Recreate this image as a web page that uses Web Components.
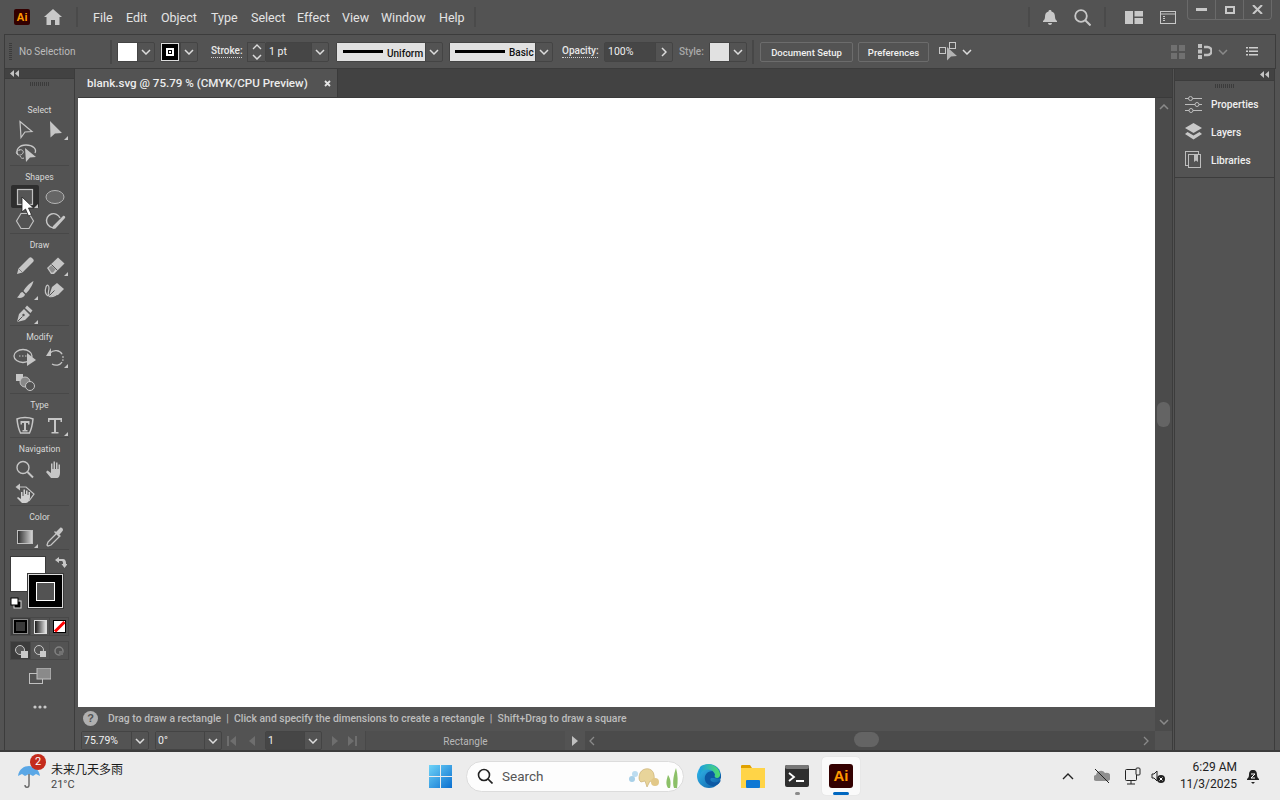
<!DOCTYPE html>
<html>
<head>
<meta charset="utf-8">
<title>Illustrator</title>
<style>
  html, body { margin: 0; height: 100%; overflow: hidden; background: #535353; }
  body { display: flex; flex-direction: column; width: 1280px; height: 800px; font-family: Roboto, "Liberation Sans", sans-serif; }
</style>
</head>
<body>
<ai-app>
  <ai-menubar></ai-menubar>
  <ai-control-bar></ai-control-bar>
  <ai-workspace>
    <ai-toolbar slot="left">
      <ai-tool-group label="Select" height="67" style="--tools-top:1px">
        <ai-tool name="select"></ai-tool><ai-tool name="direct" more></ai-tool><ai-tool name="lasso"></ai-tool>
      </ai-tool-group>
      <ai-tool-group label="Shapes" height="68">
        <ai-tool name="rect" active more></ai-tool><ai-tool name="ellipse"></ai-tool><ai-tool name="hexagon"></ai-tool><ai-tool name="shaper"></ai-tool>
      </ai-tool-group>
      <ai-tool-group label="Draw" height="92">
        <ai-tool name="pencil"></ai-tool><ai-tool name="eraser" more></ai-tool><ai-tool name="brush" more></ai-tool><ai-tool name="blob"></ai-tool><ai-tool name="pen" more></ai-tool>
      </ai-tool-group>
      <ai-tool-group label="Modify" height="68">
        <ai-tool name="warp"></ai-tool><ai-tool name="rotate" more></ai-tool><ai-tool name="builder"></ai-tool>
      </ai-tool-group>
      <ai-tool-group label="Type" height="44">
        <ai-tool name="touch"></ai-tool><ai-tool name="type" more></ai-tool>
      </ai-tool-group>
      <ai-tool-group label="Navigation" height="68">
        <ai-tool name="zoom"></ai-tool><ai-tool name="hand"></ai-tool><ai-tool name="handrot"></ai-tool>
      </ai-tool-group>
      <ai-tool-group label="Color" height="44">
        <ai-tool name="gradient" more></ai-tool><ai-tool name="dropper"></ai-tool>
      </ai-tool-group>
      <ai-color-well></ai-color-well>
    </ai-toolbar>
    <ai-document slot="center"></ai-document>
    <ai-side-panel slot="right">
      <ai-panel-item name="properties">Properties</ai-panel-item>
      <ai-panel-item name="layers">Layers</ai-panel-item>
      <ai-panel-item name="libraries">Libraries</ai-panel-item>
    </ai-side-panel>
  </ai-workspace>
</ai-app>
<win-taskbar></win-taskbar>

<script>
const CHEV = `<svg width="10" height="6" viewBox="0 0 10 6"><polyline points="1,1 5,5 9,1" fill="none" stroke="#dcdcdc" stroke-width="1.5"/></svg>`;
const GRIP = (w, h) => `<svg width="${w}" height="${h}"><defs><pattern id="g" width="2" height="2" patternUnits="userSpaceOnUse"><rect width="1" height="2" fill="#3b3b3b"/></pattern></defs><rect width="${w}" height="${h}" fill="url(#g)"/></svg>`;
const COLLAPSE = `<svg width="9" height="7" viewBox="0 0 9 7"><path d="M4 0v7L0 3.5zM9 0v7L5 3.5z" fill="#c4c4c4"/></svg>`;

// tool icons, 30x24 box centred on the tool position
const ICONS = {
  select: `<path d="M10 4.500l12 10-7 .500-4 5.500z" fill="none" stroke="#c6c6c6" stroke-width="1.200"/>`,
  direct: `<path d="M10 4l12 12-7 .500-4.500 4z" fill="#c6c6c6"/>`,
  lasso: `<path d="M8 14c-3-5 1-10 8-10s11 4 9 8" fill="none" stroke="#c6c6c6" stroke-width="1.300"/><path d="M9 9c3-1 5 1 4 3s-4 3-6 1 1-4 3-4" fill="none" stroke="#c6c6c6"/><path d="M10 15c1 2 2 3 4 2" fill="none" stroke="#c6c6c6"/><path d="M15 7l11 9-6 .500-4 4.500z" fill="#c6c6c6"/>`,
  rect: `<rect x="7.500" y="4.500" width="15" height="15" fill="#555" stroke="#c0c0c0" stroke-width="1.200"/>`,
  ellipse: `<ellipse cx="15" cy="12" rx="9" ry="6.500" fill="#666" stroke="#b4b4b4"/>`,
  hexagon: `<path d="M11 4.500h8l4.500 7.500-4.500 7.500h-8L6.500 12z" fill="none" stroke="#c0c0c0" stroke-width="1.200"/>`,
  shaper: `<path d="M15 18.500A7 7 0 1120 9" fill="none" stroke="#c6c6c6" stroke-width="1.400"/><path d="M13 17L23 7c1-1 3 1 2 2L15.500 19.500l-3 .500z" fill="#c6c6c6"/>`,
  pencil: `<path d="M7 21l1.500-5.500L19 5c1-1 2-1 3 0l1 1c1 1 1 2 0 3L12.500 19.500z" fill="#c6c6c6"/><path d="M8.500 15.500l4 4" stroke="#535353" stroke-width=".600"/>`,
  eraser: `<path d="M7 15L18 4.500l6.500 6L14 21h-3z" fill="#c6c6c6"/><path d="M11.500 11.500l6 6" stroke="#535353" stroke-width="1"/><path d="M8.500 15l3-2.500 4 4L13 19.500h-1.500z" fill="#8c8c8c"/>`,
  brush: `<path d="M23.500 4c-3 1.500-8 6-10 10l2.500 2.500c3-3 6.500-8 7.500-12.500zM12.500 15c-3 .500-3 4-5.500 5.500 3 1 7.500 0 8-3z" fill="#c6c6c6"/>`,
  blob: `<path d="M8 19c-3-2-3-6-2-9s3-2 3 1-2 6 0 8 5 0 7-1" fill="none" stroke="#c6c6c6" stroke-width="1.200"/><path d="M9 19l3-9 5-4 7 6-6 6-6 1z" fill="#c6c6c6"/><path d="M9.500 18.500l5-5" stroke="#535353"/>`,
  pen: `<path d="M7 21l2-8 5-5 6 6-5 5zM15 7l2-2.500 5.500 5-2 2.500z" fill="#c6c6c6"/><path d="M7.500 20.500l5-5" stroke="#535353"/><circle cx="13.500" cy="14" r="1.200" fill="#535353"/>`,
  warp: `<ellipse cx="13" cy="11" rx="9" ry="6.500" fill="none" stroke="#c6c6c6" stroke-width="1.300"/><path d="M9 11h8" stroke="#c6c6c6" stroke-dasharray="1.500 1.500"/><path d="M17 8l9 7-9 6z" fill="#c6c6c6"/>`,
  rotate: `<path d="M10 8c4-4 12-3 13 4s-6 10-11 7" fill="none" stroke="#c6c6c6" stroke-width="1.300" stroke-dasharray="14 2 1.500 1.500 1.500 1.500"/><path d="M11 3v8H6z" fill="#c6c6c6"/>`,
  builder: `<path d="M6 5h7v7H6z" fill="#c6c6c6"/><circle cx="15" cy="13" r="5" fill="#888" stroke="#c6c6c6"/><circle cx="20" cy="17" r="4.500" fill="#535353" stroke="#c6c6c6"/>`,
  touch: `<path d="M7 6c4-2 12-2 16 0-.500 5-1.500 10-3.500 14h-9C8.500 16 7.500 11 7 6z" fill="none" stroke="#c6c6c6" stroke-width="1.500"/><path d="M10.500 8h9v3.500H18V10h-2v7h1.500v1.500h-5V17H14v-7h-2v1.500h-1.500z" fill="#c6c6c6"/>`,
  type: `<path d="M8 5h14v4h-1.500V7H16v12h2.500v1.500h-7V19H14V7H9.500v2H8z" fill="#c6c6c6"/>`,
  zoom: `<circle cx="13" cy="10.500" r="6" fill="none" stroke="#c6c6c6" stroke-width="1.400"/><path d="M17.500 15l5.500 5.500" stroke="#c6c6c6" stroke-width="2"/>`,
  hand: `<path d="M11 21l-5-6 1.500-1.500L11 16V6.500h1.500V12h1V4.500H15V12h1V5.500h1.500V12h1V7.500H20V16c0 3-1.500 5-3 5z" fill="#c6c6c6"/>`,
  handrot: `<path d="M12 22l-5-5 1-1 3 2v-7h1.500v4h1V8.500H15V13h1V9.500h1.500V14h1v-3H20v5c0 3-2 6-4 6z" fill="#d0d0d0"/><path d="M8 6h8l8 7-5 7" fill="none" stroke="#c6c6c6" stroke-width="1.200"/><path d="M10 2.500v7L5.500 6z" fill="#c6c6c6"/>`,
  gradient: `<defs><linearGradient id="gr"><stop offset="0" stop-color="#2c2c2c"/><stop offset="1" stop-color="#d8d8d8"/></linearGradient></defs><rect x="7.500" y="5.500" width="15" height="13" fill="url(#gr)" stroke="#c0c0c0"/>`,
  dropper: `<path d="M8 21l-1-1 1-3 9-9 3 3-9 9z" fill="none" stroke="#c6c6c6" stroke-width="1.300"/><path d="M16 7l4-4c1-1 3 0 3 2 0 1-3 4-4 5l1 1-1 1-5-5 1-1z" fill="#c6c6c6"/>`
};

const PANEL_ICONS = {
  properties: `<g stroke="#bdbdbd" fill="#535353"><path d="M0 3.500h17M0 9.500h17M0 15.500h17"/><circle cx="5.500" cy="3.500" r="2"/><circle cx="12" cy="9.500" r="2"/><circle cx="6" cy="15.500" r="2"/></g>`,
  layers: `<path d="M8.500 0L17 5l-8.500 5L0 5z" fill="#c8c8c8"/><path d="M2.500 9l6 3.500 6-3.500 2.500 2-8.500 5.500L0 11z" fill="#c8c8c8"/>`,
  libraries: `<g fill="none" stroke="#bdbdbd"><rect x=".500" y=".500" width="13" height="14"/><rect x="3.500" y="3.500" width="12" height="13" fill="#535353"/></g><path d="M9 4h4v7l-2-1.500L9 11z" fill="#bdbdbd"/>`
};

class AiApp extends HTMLElement {
  constructor() {
    super();
    this.attachShadow({ mode: 'open' }).innerHTML = `
      <style>
        :host { display: flex; flex-direction: column; height: 752px; background: #535353; border-bottom: 2px solid #3c3c3c; box-sizing: border-box; }
      </style>
      <slot></slot>`;
  }
}

class AiMenubar extends HTMLElement {
  constructor() {
    super();
    const items = [['File', 93], ['Edit', 126], ['Object', 161], ['Type', 211], ['Select', 251], ['Effect', 297], ['View', 342], ['Window', 381], ['Help', 439]];
    this.attachShadow({ mode: 'open' }).innerHTML = `
      <style>
        :host { display: flex; align-items: center; height: 34px; flex: none; position: relative; color: #e4e4e4; font: 12.500px Roboto, sans-serif; }
        .logo { margin-left: 14px; width: 16px; height: 16px; background: #330000; border-radius: 2px; color: #ff9a00; font: bold 11px/16px "Liberation Sans", sans-serif; text-align: center; }
        .home { margin-left: 14px; display: block; }
        .sep { width: 2px; height: 20px; background: #4a4a4a; flex: none; }
        nav { display: flex; margin-left: 15px; width: 381px; }
        nav span { flex: none; }
        .right { display: flex; align-items: center; margin-left: auto; }
        .win { position: absolute; right: 8px; top: 0; display: flex; height: 19px; border: 1px solid #6a6a6a; border-top: 0; border-radius: 0 0 4px 4px; }
        .win div { width: 27px; display: flex; align-items: center; justify-content: center; border-left: 1px solid #6a6a6a; }
        .win div:first-child { border-left: 0; }
      </style>
      <div class="logo">Ai</div>
      <svg class="home" width="18" height="16" viewBox="0 0 18 16"><path d="M9 0l9 8h-2.500v8H11v-5H7v5H2.500V8H0z" fill="#c8c8c8"/></svg>
      <div class="sep" style="margin-left:14px"></div>
      <nav>${items.map(([t, x], i) => {
        const next = items[i + 1] ? items[i + 1][1] : x + 35;
        return `<span style="width:${next - x}px">${t}</span>`;
      }).join('')}</nav>
      <div class="sep" style="margin-left:0"></div>
      <div class="right" style="margin-right:104px">
        <div class="sep"></div>
        <svg style="margin-left:13px" width="14" height="15" viewBox="0 0 14 15"><path d="M7 0c1 0 1.500.500 1.500 1.500C11 2 12 4 12 7c0 2 1 3 2 4v1H0v-1c1-1 2-2 2-4 0-3 1-5 3.500-5.500C5.500.500 6 0 7 0zM5 13h4c0 1-1 2-2 2s-2-1-2-2z" fill="#c8c8c8"/></svg>
        <svg style="margin-left:17px" width="17" height="17" viewBox="0 0 17 17"><circle cx="7" cy="7" r="5.800" fill="none" stroke="#c8c8c8" stroke-width="1.800"/><path d="M11 11l5.500 5.500" stroke="#c8c8c8" stroke-width="2"/></svg>
        <div class="sep" style="margin-left:13px"></div>
        <svg style="margin-left:19px" width="18" height="13" viewBox="0 0 18 13"><path d="M0 0h8v13H0zM9.500 0H18v5.500H9.500zM9.500 7H18v6H9.500z" fill="#c8c8c8"/></svg>
        <svg style="margin-left:17px" width="16" height="13" viewBox="0 0 16 13"><rect x=".500" y=".500" width="15" height="12" fill="none" stroke="#c8c8c8"/><path d="M1 3h14" stroke="#c8c8c8"/><path d="M3 5h2v1H3zM3 7h2v1H3zM3 9h2v1H3z" fill="#c8c8c8"/></svg>
      </div>
      <div class="win">
        <div><svg width="11" height="3"><rect width="11" height="3" fill="#c8c8c8"/></svg></div>
        <div><svg width="10" height="8"><rect x="1" y="1" width="8" height="6" fill="none" stroke="#c8c8c8" stroke-width="2"/></svg></div>
        <div><svg width="11" height="9" viewBox="0 0 11 9"><path d="M1 0l9 9M10 0L1 9" stroke="#c8c8c8" stroke-width="2"/></svg></div>
      </div>`;
  }
}

class AiCombo extends HTMLElement {
  constructor() {
    super();
    this.attachShadow({ mode: 'open' }).innerHTML = `
      <style>
        :host { display: inline-flex; flex: none; height: 20px; box-sizing: border-box; border: 1px solid #444; border-radius: 2px; }
        .main { display: flex; align-items: center; height: 100%; background: var(--combo-bg, #464646); color: #f0f0f0; font: 10.500px Roboto, sans-serif; padding-left: var(--combo-pad, 3px); box-sizing: border-box; }
        .chev { display: flex; align-items: center; justify-content: center; width: 17px; box-sizing: border-box; border-left: 1px solid #444; }
      </style>
      <div class="main"><slot></slot></div>
      <div class="chev">${CHEV}</div>`;
    this.shadowRoot.querySelector('.main').style.width = this.getAttribute('main') + 'px';
    if (this.hasAttribute('next')) this.shadowRoot.querySelector('.chev').innerHTML = '<svg width="6" height="10" viewBox="0 0 6 10"><polyline points="1,1 5,5 1,9" fill="none" stroke="#dcdcdc" stroke-width="1.500"/></svg>';
  }
}

class AiControlBar extends HTMLElement {
  constructor() {
    super();
    this.attachShadow({ mode: 'open' }).innerHTML = `
      <style>
        :host { display: flex; align-items: center; flex: none; height: 35px; margin: 0 4px 0 4px; box-sizing: border-box; border: 1px solid #3c3c3c; color: #e8e8e8; font: 500 10px Roboto, sans-serif; }
        .grip { margin-left: 4px; width: 3px; height: 18px; display: block; flex: none; }
        .none { margin-left: 7px; width: 91px; color: #bcbcbc; flex: none; font-weight: 400; }
        .sep { width: 2px; height: 24px; background: #474747; flex: none; }
        .lbl { flex: none; border-bottom: 1px dotted #cfcfcf; line-height: 12px; white-space: nowrap; }
        .plain { flex: none; color: #a8a8a8; width: 24px; }
        .sw { width: 19px; height: 18px; flex: none; margin: 0 0 0 -3px; }
        .stroke { display: flex; align-items: center; justify-content: center; background: #000; border: 1px solid #ddd; width: 18px; height: 18px; box-sizing: border-box; margin-left: -3px; }
        .spin { display: flex; flex-direction: column; justify-content: center; gap: 4px; align-items: center; width: 18px; height: 20px; border: 1px solid #444; border-right: 0; box-sizing: border-box; flex: none; }
        .line { display: flex; align-items: center; height: 100%; width: 100%; background: #e1e1e1; color: #111; margin-left: -3px; font-weight: 500; font-size: 10px; }
        .line i { display: block; height: 3px; background: #000; flex: none; }
        button { all: unset; box-sizing: border-box; flex: none; height: 20px; border: 1px solid #6c6c6c; border-radius: 2px; color: #f0f0f0; font: 500 9.500px Roboto, sans-serif; text-align: center; line-height: 19px; }
        .right { margin-left: auto; display: flex; align-items: center; margin-right: 17px; }
      </style>
      <svg class="grip" viewBox="0 0 3 18"><path d="M0 .500h3M0 2.500h3M0 4.500h3M0 6.500h3M0 8.500h3M0 10.500h3M0 12.500h3M0 14.500h3M0 16.500h3" stroke="#3b3b3b"/></svg>
      <span class="none">No Selection</span>
      <span class="sep"></span>
      <ai-combo main="19" style="margin-left:5px"><div class="sw" style="background:#fff"></div></ai-combo>
      <ai-combo main="19" style="margin-left:5px"><div class="stroke"><svg width="8" height="8"><rect x="1" y="1" width="6" height="6" fill="none" stroke="#fff" stroke-width="2"/><rect x="3" y="3" width="2" height="2" fill="#fff"/></svg></div></ai-combo>
      <span class="lbl" style="margin-left:13px;width:31px">Stroke:</span>
      <div class="spin" style="margin-left:5px"><svg width="10" height="6" viewBox="0 0 10 6"><polyline points="1,5 5,1 9,5" fill="none" stroke="#dcdcdc" stroke-width="1.300"/></svg>${CHEV}</div>
      <ai-combo main="45">1 pt</ai-combo>
      <ai-combo main="88" style="margin-left:7px; --combo-bg:#e1e1e1"><div class="line"><i style="width:40px;margin-left:6px"></i><span style="margin-left:4px;position:relative;top:2px">Uniform</span></div></ai-combo>
      <ai-combo main="85" style="margin-left:6px; --combo-bg:#e1e1e1"><div class="line"><i style="width:50px;margin-left:5px"></i><span style="margin-left:4px;position:relative;top:1px">Basic</span></div></ai-combo>
      <span class="lbl" style="margin-left:9px;width:36px">Opacity:</span>
      <ai-combo main="50" next style="margin-left:6px">100%</ai-combo>
      <span class="plain" style="margin-left:6px">Style:</span>
      <ai-combo main="19" style="margin-left:6px"><div class="sw" style="background:#e1e1e1"></div></ai-combo>
      <span class="sep" style="margin-left:5px"></span>
      <button style="width:93px;margin-left:6px">Document Setup</button>
      <button style="width:71px;margin-left:5px">Preferences</button>
      <svg style="margin-left:10px;flex:none" width="20" height="20" viewBox="0 0 20 20"><g fill="none" stroke="#c8c8c8"><rect x="10.500" y=".500" width="6" height="6"/><rect x=".500" y="5.500" width="6" height="6"/></g><path d="M8 5l10 9-6 .500-4 4z" fill="#b4b4b4"/></svg>
      <span style="margin-left:3px;display:flex">${CHEV}</span>
      <div class="right">
        <svg width="16" height="15" viewBox="0 0 16 15"><path d="M1 1h6v6H1zM9 1h6v6H9zM1 9h6v6H1zM9 9h6v6H9z" fill="#707070"/></svg>
        <svg style="margin-left:12px" width="14" height="15" viewBox="0 0 14 15"><path d="M0 0h4v4H0zM0 5.500h4v4H0zM0 11h4v4H0z" fill="#c0c0c0"/><path d="M6 3h3.500a4 4 0 010 8H6" fill="none" stroke="#c0c0c0" stroke-width="2.500"/></svg>
        <span style="margin-left:6px;display:flex;opacity:.4">${CHEV}</span>
        <svg style="margin-left:18px" width="12" height="9" viewBox="0 0 12 9"><path d="M0 0h2v1.500H0zM3 0h9v1.500H3zM0 3.500h2V5H0zM3 3.500h9V5H3zM0 7h2v1.500H0zM3 7h9v1.500H3z" fill="#cfcfcf"/></svg>
      </div>`;
  }
}

class AiWorkspace extends HTMLElement {
  constructor() {
    super();
    this.attachShadow({ mode: 'open' }).innerHTML = `
      <style>
        :host { display: grid; grid-template-columns: 71px 1095px 101px; column-gap: 1px; flex: 1; margin: 0 0 0 4px; min-height: 0; }
        ::slotted(*) { min-height: 0; }
        ::slotted([slot="center"]) { margin-left: 2px; margin-right: -2px; }
        ::slotted([slot="right"]) { margin-left: 2px; }
      </style>
      <slot name="left"></slot><slot name="center"></slot><slot name="right"></slot>`;
  }
}

class AiToolbar extends HTMLElement {
  constructor() {
    super();
    this.attachShadow({ mode: 'open' }).innerHTML = `
      <style>
        :host { display: flex; flex-direction: column; box-sizing: border-box; border-left: 1px solid #3c3c3c; border-right: 1px solid #3c3c3c; width: 71px; }
        .head { height: 11px; background: #424242; border-bottom: 1px solid #3c3c3c; display: flex; align-items: center; padding-left: 5px; }
        .grip { height: 4px; display: flex; justify-content: center; margin: 3px 0 13px; }
        .grip svg { display: block; }
        .body { display: flex; flex-direction: column; }
      </style>
      <div class="head">${COLLAPSE}</div>
      <div class="grip">${GRIP(20, 4)}</div>
      <div class="body"><slot></slot></div>`;
  }
}

class AiToolGroup extends HTMLElement {
  constructor() {
    super();
    this.attachShadow({ mode: 'open' }).innerHTML = `
      <style>
        :host { display: block; box-sizing: border-box; margin: 0 5px; border-bottom: 1px solid #484848; height: ${this.getAttribute('height')}px; }
        .lbl { text-align: center; color: #d8d8d8; font: 8.700px/12px Roboto, sans-serif; height: 12px; padding-top: 5px; }
        .grid { display: grid; grid-template-columns: 30px 30px; grid-auto-rows: 24px; justify-content: center; margin-top: var(--tools-top, 2px); }
      </style>
      <div class="lbl">${this.getAttribute('label')}</div>
      <div class="grid"><slot></slot></div>`;
  }
}

class AiTool extends HTMLElement {
  constructor() {
    super();
    const name = this.getAttribute('name');
    const active = this.hasAttribute('active');
    this.attachShadow({ mode: 'open' }).innerHTML = `
      <style>
        :host { display: block; position: relative; width: 30px; height: 24px; }
        svg { position: absolute; left: 0; top: 0; }
        .on { position: absolute; left: 1px; top: 0; width: 28px; height: 23px; background: #2e2e2e; border-radius: 2px; }
        .more { position: absolute; right: 2px; bottom: 1px; width: 0; height: 0; border-left: 4px solid transparent; border-bottom: 4px solid #c8c8c8; }
      </style>
      ${active ? '<div class="on"></div>' : ''}
      <svg width="30" height="24" viewBox="0 0 30 24">${ICONS[name] || ''}</svg>
      ${this.hasAttribute('more') ? '<div class="more"></div>' : ''}
      ${active ? '<svg style="left:11px;top:11px;z-index:2" width="14" height="22" viewBox="0 0 14 22"><path d="M1 1v15l3.500-3 3 7 3-1.300-3-6.700h5z" fill="#fff" stroke="#222" stroke-width=".800"/></svg>' : ''}`;
  }
}

class AiColorWell extends HTMLElement {
  constructor() {
    super();
    this.attachShadow({ mode: 'open' }).innerHTML = `
      <style>
        :host { display: block; position: relative; height: 200px; }
        .fill { position: absolute; left: 5px; top: 6px; width: 36px; height: 36px; background: #fff; border: 1px solid #3a3a3a; box-sizing: border-box; }
        .stroke { position: absolute; left: 23px; top: 24px; width: 35px; height: 34px; background: #000; border: 1px solid #ddd; box-sizing: border-box; outline: 1px solid #3a3a3a; }
        .stroke div { margin: 7px auto 0; width: 17px; height: 17px; background: #535353; border: 1px solid #fff; }
        .swap { position: absolute; left: 49px; top: 6px; }
        .def { position: absolute; left: 5px; top: 47px; }
        .row { position: absolute; left: 5px; width: 59px; height: 19px; display: grid; grid-template-columns: repeat(3, 1fr); border: 1px solid #484848; box-sizing: border-box; }
        .row div { display: flex; align-items: center; justify-content: center; border-left: 1px solid #484848; }
        .row div:first-child { border-left: 0; background: #3c3c3c; }
        .screen { position: absolute; left: 24px; top: 118px; }
        .dots { position: absolute; left: 28px; top: 155px; }
      </style>
      <div class="fill"></div>
      <div class="stroke"><div></div></div>
      <svg class="swap" width="13" height="13" viewBox="0 0 13 13"><path d="M1 4l4-3v2h4c2 0 3 2 3 4v1h1.500l-3 4-3-4H9V7c0-1-.500-2-1-2H5v2z" fill="#c8c8c8"/></svg>
      <svg class="def" width="12" height="12"><rect x="4" y="4" width="7" height="7" fill="#000" stroke="#ddd"/><rect x="1" y="1" width="7" height="7" fill="#fff" stroke="#000"/></svg>
      <div class="row" style="top:67px">
        <div><svg width="15" height="15"><rect x=".500" y=".500" width="14" height="14" fill="#000" stroke="#888"/><rect x="3" y="3" width="9" height="9" fill="#3a3a3a"/></svg></div>
        <div><svg width="13" height="14"><defs><linearGradient id="cg"><stop offset="0" stop-color="#111"/><stop offset="1" stop-color="#eee"/></linearGradient></defs><rect x=".500" y=".500" width="12" height="13" fill="url(#cg)" stroke="#ddd"/></svg></div>
        <div><svg width="13" height="13"><rect x=".500" y=".500" width="12" height="12" fill="#fff" stroke="#000"/><path d="M2 11.500L11.500 2" stroke="#f00" stroke-width="3"/></svg></div>
      </div>
      <div class="row" style="top:91px">
        <div><svg width="14" height="14"><circle cx="6" cy="6" r="4.500" fill="#555" stroke="#c8c8c8"/><rect x="7" y="7" width="7" height="7" fill="#c8c8c8"/></svg></div>
        <div><svg width="14" height="14"><circle cx="6" cy="6" r="4.500" fill="none" stroke="#c8c8c8"/><rect x="7" y="7" width="6" height="6" fill="#c8c8c8"/></svg></div>
        <div style="opacity:.45"><svg width="12" height="12"><circle cx="6" cy="6" r="4" fill="none" stroke="#bbb" stroke-width="1.500"/><rect x="6" y="6" width="4" height="4" fill="#999"/></svg></div>
      </div>
      <svg class="screen" width="22" height="16"><rect x=".500" y="5.500" width="13" height="10" fill="none" stroke="#c0c0c0"/><rect x="8" y="0" width="14" height="11" fill="#8a8a8a" stroke="#c0c0c0"/></svg>
      <svg class="dots" width="14" height="4"><circle cx="2" cy="2" r="1.600" fill="#c8c8c8"/><circle cx="7" cy="2" r="1.600" fill="#c8c8c8"/><circle cx="12" cy="2" r="1.600" fill="#c8c8c8"/></svg>`;
  }
}

class AiDocument extends HTMLElement {
  constructor() {
    super();
    const nav = (d) => `<svg width="10" height="10" viewBox="0 0 10 10"><path d="${d}" fill="#6e6e6e"/></svg>`;
    this.attachShadow({ mode: 'open' }).innerHTML = `
      <style>
        :host { display: grid; grid-template-columns: 1077px 17px; grid-template-rows: 29px 609px 24px 19px; border-right: 1px solid #3c3c3c; font-family: Roboto, sans-serif; }
        .tabs { grid-column: 1 / 3; background: #424242; display: flex; border-bottom: 1px solid #3a3a3a; box-sizing: border-box; }
        .tab { display: flex; align-items: center; width: 260px; box-sizing: border-box; padding: 0 6px 0 9px; background: #535353; color: #ececec; font: 500 11.600px Roboto, sans-serif; justify-content: space-between; border-right: 1px solid #3a3a3a; }
        .canvas { background: #fff; }
        .vbar { grid-row: 2 / 4; grid-column: 2; background: #4b4b4b; position: relative; display: flex; flex-direction: column; justify-content: space-between; align-items: center; padding: 6px 0 6px; box-sizing: border-box; }
        .thumb { position: absolute; left: 2px; top: 304px; width: 13px; height: 25px; border-radius: 6px; background: #646464; }
        .hint { display: flex; align-items: center; color: #bdbdbd; font: 500 10.400px Roboto, sans-serif; padding: 0 0 2px 5px; gap: 10px; }
        .hint i { width: 15px; height: 15px; border-radius: 50%; background: #b0b0b0; color: #535353; font: bold 11px/15px "Liberation Sans", sans-serif; text-align: center; flex: none; }
        .bottom { grid-column: 1 / 3; display: flex; align-items: center; height: 19px; --combo-pad: 2px; }
        .bottom ai-combo { height: 19px; }
        .status { flex: none; width: 200px; text-align: center; color: #b8b8b8; font: 10px Roboto, sans-serif; border-left: 1px solid #484848; height: 100%; line-height: 21px; margin-left: 8px; background: #4f4f4f; box-sizing: border-box; }
        .hbar { flex: 1; background: #4b4b4b; height: 100%; position: relative; margin-right: 17px; display: flex; align-items: center; justify-content: space-between; padding: 0 6px 0 4px; }
        .hthumb { position: absolute; left: 269px; top: 1px; width: 25px; height: 15px; border-radius: 8px; background: #646464; }
      </style>
      <div class="tabs"><div class="tab"><span>blank.svg @ 75.79 % (CMYK/CPU Preview)</span><svg width="7" height="7" viewBox="0 0 7 7"><path d="M1 1l5 5M6 1L1 6" stroke="#e6e6e6" stroke-width="1.800"/></svg></div></div>
      <div class="canvas"></div>
      <div class="vbar">
        <svg width="10" height="6" viewBox="0 0 10 6"><polyline points="1,5 5,1 9,5" fill="none" stroke="#8a8a8a" stroke-width="1.500"/></svg>
        <div class="thumb"></div>
        <svg width="10" height="6" viewBox="0 0 10 6"><polyline points="1,1 5,5 9,1" fill="none" stroke="#8a8a8a" stroke-width="1.500"/></svg>
      </div>
      <div class="hint"><i>?</i><span>Drag to draw a rectangle &nbsp;|&nbsp; Click and specify the dimensions to create a rectangle &nbsp;|&nbsp; Shift+Drag to draw a square</span></div>
      <div class="bottom">
        <ai-combo main="49" style="margin-left:3px;--combo-bg:#535353">75.79%</ai-combo>
        <ai-combo main="48" style="margin-left:6px;--combo-bg:#535353">0°</ai-combo>
        <span style="margin-left:5px;display:flex;gap:10px">${nav('M0 0h2v10H0zM9 0v10L3 5z')}${nav('M8 0v10L2 5z')}</span>
        <ai-combo main="38" style="margin-left:8px">1</ai-combo>
        <span style="margin-left:8px;display:flex;gap:7px">${nav('M2 0v10l6-5z')}${nav('M1 0v10l6-5zM8 0h2v10H8z')}</span>
        <div class="status">Rectangle</div>
        <svg style="margin-left:6px;flex:none" width="8" height="10" viewBox="0 0 8 10"><path d="M1 0v10l6-5z" fill="#c0c0c0"/></svg>
        <div class="hbar" style="margin-left:6px">
          <svg width="6" height="10" viewBox="0 0 6 10"><polyline points="5,1 1,5 5,9" fill="none" stroke="#8a8a8a" stroke-width="1.300"/></svg>
          <div class="hthumb"></div>
          <svg width="6" height="10" viewBox="0 0 6 10"><polyline points="1,1 5,5 1,9" fill="none" stroke="#8a8a8a" stroke-width="1.300"/></svg>
        </div>
      </div>`;
  }
}

class AiSidePanel extends HTMLElement {
  constructor() {
    super();
    this.attachShadow({ mode: 'open' }).innerHTML = `
      <style>
        :host { display: flex; flex-direction: column; width: 101px; box-sizing: border-box; border-left: 1px solid #3c3c3c; border-right: 1px solid #3c3c3c; }
        .head { height: 12px; background: #424242; border-bottom: 1px solid #3c3c3c; display: flex; align-items: center; justify-content: flex-end; padding-right: 5px; box-sizing: border-box; }
        .grip { height: 4px; display: flex; justify-content: center; margin: 3px 0 2px; }
        .grip svg { display: block; }
        .items { border-bottom: 1px solid #3c3c3c; padding-bottom: 3px; }
      </style>
      <div class="head">${COLLAPSE}</div>
      <div class="grip">${GRIP(20, 4)}</div>
      <div class="items"><slot></slot></div>`;
  }
}

class AiPanelItem extends HTMLElement {
  constructor() {
    super();
    this.attachShadow({ mode: 'open' }).innerHTML = `
      <style>
        :host { display: flex; align-items: center; height: 28px; padding-left: 10px; color: #f0f0f0; font: 500 10.200px Roboto, sans-serif; }
        svg { flex: none; margin-right: 9px; }
      </style>
      <svg width="17" height="18" viewBox="0 0 17 18">${PANEL_ICONS[this.getAttribute('name')]}</svg>
      <slot></slot>`;
  }
}

class WinTaskbar extends HTMLElement {
  constructor() {
    super();
    this.attachShadow({ mode: 'open' }).innerHTML = `
      <style>
        :host { display: flex; align-items: center; flex: none; position: relative; height: 48px; background: #ececec; color: #1a1a1a; font-family: Roboto, "Noto Sans CJK SC", sans-serif; }
        .weather { display: flex; align-items: center; margin-left: 18px; width: 411px; flex: none; position: relative; }
        .badge { position: absolute; left: 12px; top: -6px; width: 16px; height: 16px; border-radius: 50%; background: #c42b1c; color: #fff; font: 11px/16px Roboto, sans-serif; text-align: center; }
        .wtext { margin-left: 11px; font: 12px/17px "Noto Sans CJK SC", sans-serif; }
        .wtext small { display: block; font: 11px/16px Roboto, sans-serif; color: #444; }
        .search { display: flex; align-items: center; flex: none; box-sizing: border-box; margin-left: 14px; width: 218px; height: 31px; border-radius: 16px; background: #fdfdfd; border: 1px solid #dcdcdc; padding-left: 10px; color: #555; font: 13.500px Roboto, sans-serif; position: relative; }
        .search span { margin-left: 9px; }
        .deco { position: absolute; right: 2px; top: 2px; }
        .app { flex: none; width: 38px; height: 38px; margin-left: 6px; display: flex; align-items: center; justify-content: center; position: relative; box-sizing: border-box; border-radius: 4px; }
        .app.on { background: #fafafa; box-shadow: 0 0 1px #ccc; }
        .app.on::after { content: ''; position: absolute; left: 11px; bottom: 0; width: 16px; height: 3px; border-radius: 2px; background: #0067c0; }
        .app.run::after { content: ''; position: absolute; left: 17px; bottom: 0; width: 5px; height: 3px; border-radius: 2px; background: #8a8a8a; }
        .ai { width: 24px; height: 24px; border-radius: 3px; background: #330000; color: #ff9a00; font: bold 15px/24px "Liberation Sans", sans-serif; text-align: center; }
        .tray { display: flex; align-items: center; margin-left: auto; flex: none; }
        .clock { text-align: right; font: 12px/17px Roboto, sans-serif; width: 72px; color: #222; }
      </style>
      <div class="weather">
        <svg width="22" height="26" viewBox="0 0 22 26"><path d="M0 13C1 6 6 3 11 3s10 3 11 10l-4-2-3 2-4-2-4 2-3-2z" fill="#5aa7e6"/><path d="M11 11v11c0 3-4 3-4 0" fill="none" stroke="#666" stroke-width="1.400"/></svg>
        <div class="badge">2</div>
        <div class="wtext">未来几天多雨<small>21°C</small></div>
      </div>
      <svg width="23" height="23" viewBox="0 0 23 23"><defs><linearGradient id="wl" x1="0" y1="0" x2="1" y2="1"><stop offset="0" stop-color="#6fd4f8"/><stop offset="1" stop-color="#0a6fd0"/></linearGradient></defs><path d="M0 0h11v11H0zM12 0h11v11H12zM0 12h11v11H0zM12 12h11v11H12z" fill="url(#wl)"/></svg>
      <div class="search">
        <svg width="16" height="16" viewBox="0 0 16 16"><circle cx="7" cy="7" r="5.500" fill="none" stroke="#222" stroke-width="1.600"/><path d="M11 11l4.500 4.500" stroke="#222" stroke-width="1.700"/></svg>
        <span>Search</span>
        <svg class="deco" width="52" height="26" viewBox="0 0 52 26"><circle cx="6" cy="10" r="3" fill="#bcdcf0"/><circle cx="3" cy="15" r="3" fill="#a8d0e8"/><path d="M11 9c3-6 13-6 14 2 1 5-1 8-4 6l-3 6-2-6-4 1c-3-2-2-6-1-9z" fill="#e8d49a" stroke="#c4a868" stroke-width=".600"/><circle cx="26" cy="18" r="4" fill="#e2c888"/><path d="M39 24c-3-5-1-9 0-13 3 4 3 9 2 13zM45 24c-2-6 0-14 2-20 2 7 2 14 1 20z" fill="#8cc068"/></svg>
      </div>
      <div class="app" style="margin-left:6px"><svg width="24" height="24" viewBox="0 0 24 24"><defs><linearGradient id="e1" x1="0" y1="0" x2="1" y2="1"><stop offset="0" stop-color="#35c1f1"/><stop offset="1" stop-color="#0c59a4"/></linearGradient><linearGradient id="e2" x1="0" y1="0" x2="1" y2="0"><stop offset="0" stop-color="#1b9de2"/><stop offset="1" stop-color="#4fde6a"/></linearGradient></defs><circle cx="12" cy="12" r="12" fill="url(#e1)"/><path d="M24 13c0-3-3-6-8-6-6 0-9 4-8 9 1 4 5 6 9 6 4-1 6-3 7-6-3 3-8 3-10 1-1-1-1-3 1-3 4 0 9 2 9-1z" fill="#0c59a4"/><path d="M3 3c4-4 15-4 19 4 2 4 1 7-2 7-2 0-3-2-2-3 0-3-5-7-10-5-3 1-5 3-5 6-1-3-1-6 0-9z" fill="url(#e2)"/></svg></div>
      <div class="app"><svg width="26" height="24" viewBox="0 0 26 24"><path d="M1 2c0-1 1-1 1-1h8l2 3h-11z" fill="#e0a100"/><path d="M1 4h24v20H1z" fill="#ffd447"/><rect x="6" y="16" width="14" height="8" rx="1" fill="#0f78d4"/></svg></div>
      <div class="app run"><svg width="24" height="22" viewBox="0 0 24 22"><rect width="24" height="22" rx="2" fill="#2f2f2f"/><rect width="24" height="4" rx="2" fill="#777"/><path d="M4 8l5 4-5 4" fill="none" stroke="#fff" stroke-width="1.800"/><path d="M11 16h8" stroke="#fff" stroke-width="2"/></svg></div>
      <div class="app on"><div class="ai">Ai</div></div>
      <div class="tray">
        <svg width="12" height="7" viewBox="0 0 12 7"><polyline points="1,6 6,1 11,6" fill="none" stroke="#222" stroke-width="1.400"/></svg>
        <svg style="margin-left:20px" width="16" height="16" viewBox="0 0 16 16"><path d="M3 13a3 3 0 01-1-6 5 5 0 019-2 4 4 0 013 8z" fill="#8f8f8f"/><path d="M1 1l14 14" stroke="#222"/></svg>
        <svg style="margin-left:15px" width="16" height="18" viewBox="0 0 16 18"><rect x=".500" y="2.500" width="11" height="11" rx="1" fill="none" stroke="#222"/><rect x="11" y="1" width="4" height="7" rx="1" fill="#ececec" stroke="#222"/><path d="M6 14v3M2 17h8" stroke="#222"/></svg>
        <svg style="margin-left:10px" width="14" height="15" viewBox="0 0 14 15"><path d="M1 5h2l3-3v10L3 9H1z" fill="none" stroke="#222"/><circle cx="10" cy="10" r="4" fill="#222"/><path d="M8.500 8.500l3 3M11.500 8.500l-3 3" stroke="#fff"/></svg>
        <div class="clock">6:29 AM<br>11/3/2025</div>
        <svg style="margin:0 20px 0 9px" width="14" height="18" viewBox="0 0 14 18"><path d="M7 3c3 0 4 2 4 5 0 2 1 3 2 4v1H1v-1c1-1 2-2 2-4 0-3 1-5 4-5z" fill="#222"/><path d="M5 15h4l-2 2z" fill="#222"/><path d="M5 7h4l-4 4h4" fill="none" stroke="#fff"/></svg>
      </div>`;
  }
}

customElements.define('ai-app', AiApp);
customElements.define('ai-menubar', AiMenubar);
customElements.define('ai-combo', AiCombo);
customElements.define('ai-control-bar', AiControlBar);
customElements.define('ai-workspace', AiWorkspace);
customElements.define('ai-toolbar', AiToolbar);
customElements.define('ai-tool-group', AiToolGroup);
customElements.define('ai-tool', AiTool);
customElements.define('ai-color-well', AiColorWell);
customElements.define('ai-document', AiDocument);
customElements.define('ai-side-panel', AiSidePanel);
customElements.define('ai-panel-item', AiPanelItem);
customElements.define('win-taskbar', WinTaskbar);
</script>
</body>
</html>
